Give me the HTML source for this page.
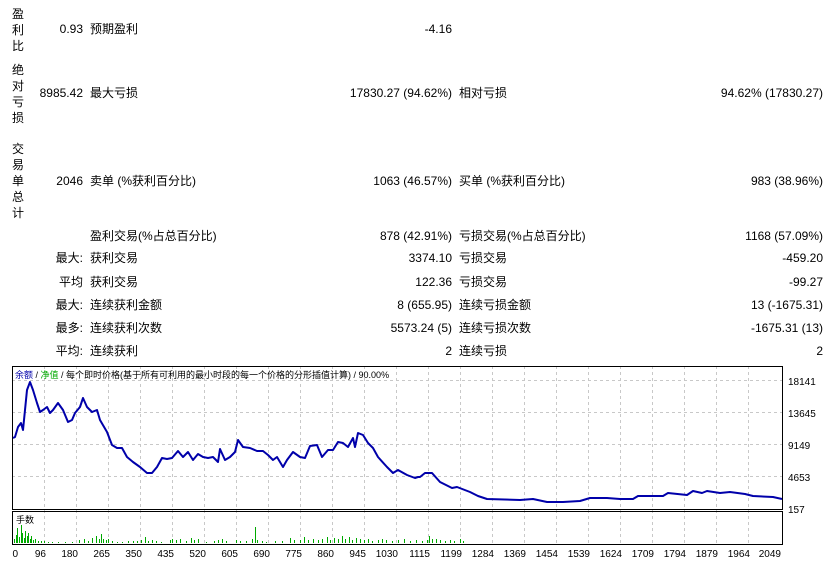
<!DOCTYPE html>
<html><head><meta charset="utf-8"><style>
body{margin:0;width:839px;height:566px;background:#fff;overflow:hidden;font-family:"Liberation Sans","Noto Sans CJK SC",sans-serif;font-size:12px;color:#000;position:relative}
.t{position:absolute;white-space:nowrap;line-height:14px}
.r{text-align:right}
.v{position:absolute;left:12px;width:14px;line-height:16px;font-size:12px}
</style></head><body>
<div class="v" style="top:6px">盈<br>利<br>比</div>
<div class="v" style="top:62px">绝<br>对<br>亏<br>损</div>
<div class="v" style="top:141px">交<br>易<br>单<br>总<br>计</div>

<div class="t r" style="right:756px;top:22px">0.93</div>
<div class="t" style="left:90px;top:22px">预期盈利</div>
<div class="t r" style="right:387px;top:22px">-4.16</div>

<div class="t r" style="right:756px;top:86px">8985.42</div>
<div class="t" style="left:90px;top:86px">最大亏损</div>
<div class="t r" style="right:387px;top:86px">17830.27 (94.62%)</div>
<div class="t" style="left:459px;top:86px">相对亏损</div>
<div class="t r" style="right:16px;top:86px">94.62% (17830.27)</div>

<div class="t r" style="right:756px;top:174px">2046</div>
<div class="t" style="left:90px;top:174px">卖单 (%获利百分比)</div>
<div class="t r" style="right:387px;top:174px">1063 (46.57%)</div>
<div class="t" style="left:459px;top:174px">买单 (%获利百分比)</div>
<div class="t r" style="right:16px;top:174px">983 (38.96%)</div>

<div class="t" style="left:90px;top:229px">盈利交易(%占总百分比)</div>
<div class="t r" style="right:387px;top:229px">878 (42.91%)</div>
<div class="t" style="left:459px;top:229px">亏损交易(%占总百分比)</div>
<div class="t r" style="right:16px;top:229px">1168 (57.09%)</div>

<div class="t r" style="right:756px;top:251px">最大:</div>
<div class="t" style="left:90px;top:251px">获利交易</div>
<div class="t r" style="right:387px;top:251px">3374.10</div>
<div class="t" style="left:459px;top:251px">亏损交易</div>
<div class="t r" style="right:16px;top:251px">-459.20</div>

<div class="t r" style="right:756px;top:275px">平均</div>
<div class="t" style="left:90px;top:275px">获利交易</div>
<div class="t r" style="right:387px;top:275px">122.36</div>
<div class="t" style="left:459px;top:275px">亏损交易</div>
<div class="t r" style="right:16px;top:275px">-99.27</div>

<div class="t r" style="right:756px;top:298px">最大:</div>
<div class="t" style="left:90px;top:298px">连续获利金额</div>
<div class="t r" style="right:387px;top:298px">8 (655.95)</div>
<div class="t" style="left:459px;top:298px">连续亏损金额</div>
<div class="t r" style="right:16px;top:298px">13 (-1675.31)</div>

<div class="t r" style="right:756px;top:321px">最多:</div>
<div class="t" style="left:90px;top:321px">连续获利次数</div>
<div class="t r" style="right:387px;top:321px">5573.24 (5)</div>
<div class="t" style="left:459px;top:321px">连续亏损次数</div>
<div class="t r" style="right:16px;top:321px">-1675.31 (13)</div>

<div class="t r" style="right:756px;top:344px">平均:</div>
<div class="t" style="left:90px;top:344px">连续获利</div>
<div class="t r" style="right:387px;top:344px">2</div>
<div class="t" style="left:459px;top:344px">连续亏损</div>
<div class="t r" style="right:16px;top:344px">2</div>

<svg width="839" height="566" style="position:absolute;left:0;top:0" xmlns="http://www.w3.org/2000/svg">
<g stroke="#c8c8c8" stroke-dasharray="3,3" stroke-width="1">
<path d="M44.5 366V545M76.5 366V545M108.5 366V545M140.5 366V545M172.5 366V545M204.5 366V545M236.5 366V545M268.5 366V545M300.5 366V545M332.5 366V545M364.5 366V545M396.5 366V545M428.5 366V545M460.5 366V545M492.5 366V545M524.5 366V545M556.5 366V545M588.5 366V545M620.5 366V545M652.5 366V545M684.5 366V545M716.5 366V545M748.5 366V545"/>
<path d="M12 380.5H783M12 412.5H783M12 444.5H783M12 476.5H783"/>
</g>
<rect x="12.5" y="366.5" width="770" height="143" fill="none" stroke="#000" stroke-width="1"/>
<rect x="12.5" y="511.5" width="770" height="33" fill="none" stroke="#000" stroke-width="1"/>
<polyline fill="none" stroke="#0000aa" stroke-width="2" stroke-linejoin="round" points="13,438 15,437 18,427 21,423 23,430 27,390 30,382 33,390 37,403 40,412 43,410 47,407 50,413 53,410 58,403 63,410 68,422 72,420 75,413 80,407 83,398 87,407 92,412 97,410 100,420 107,432 112,445 117,448 122,448 127,457 133,462 140,467 147,473 152,473 157,467 162,458 167,459 172,458 178,451 183,457 188,452 193,460 198,454 203,457 208,458 213,457 218,462 220,449 225,460 230,457 235,452 238,440 243,447 250,448 257,451 263,451 268,455 273,460 277,457 283,467 287,460 293,452 300,457 305,458 310,446 317,445 322,457 328,450 333,450 338,442 343,443 348,447 353,438 355,447 358,433 363,435 368,443 373,448 378,457 387,467 393,473 398,470 407,475 415,478 418,477 420,477 425,473 432,473 440,482 452,488 457,487 470,492 478,496 487,499 520,500 533,499 547,502 563,502 580,501 590,498 607,498 620,499 633,499 638,496 653,496 663,496 668,493 687,495 693,491 702,493 707,491 720,493 730,492 745,494 753,496 773,497 782,499"/>
<path stroke="#00aa00" stroke-width="1" fill="none" d="M14.5 543v-4M16.5 543v-8M17.5 543v-15M19.5 543v-6M21.5 543v-18M22.5 543v-10M24.5 543v-5M25.5 543v-12M27.5 543v-7M28.5 543v-10M30.5 543v-4M31.5 543v-7M33.5 543v-3M35.5 543v-4M38.5 543v-2M41.5 543v-2M44.5 543v-2M48.5 543v-1M52.5 543v-1M58.5 543v-1M65.5 543v-1M72.5 543v-1M79.5 543v-3M84.5 543v-4M88.5 543v-2M92.5 543v-5M96.5 543v-7M99.5 543v-4M101.5 543v-9M103.5 543v-4M106.5 543v-3M108.5 543v-4M112.5 543v-2M117.5 543v-1M122.5 543v-1M128.5 543v-2M133.5 543v-2M137.5 543v-2M141.5 543v-3M145.5 543v-6M148.5 543v-2M152.5 543v-3M156.5 543v-2M161.5 543v-1M170.5 543v-3M172.5 543v-4M176.5 543v-3M180.5 543v-4M186.5 543v-2M191.5 543v-5M194.5 543v-3M198.5 543v-4M206.5 543v-1M214.5 543v-2M218.5 543v-3M222.5 543v-4M226.5 543v-2M236.5 543v-3M240.5 543v-2M246.5 543v-2M252.5 543v-4M255.5 543v-16M257.5 543v-3M262.5 543v-2M266.5 543v-1M275.5 543v-2M282.5 543v-2M290.5 543v-5M294.5 543v-3M300.5 543v-3M304.5 543v-6M308.5 543v-3M313.5 543v-4M318.5 543v-3M322.5 543v-4M327.5 543v-6M330.5 543v-3M334.5 543v-5M338.5 543v-4M342.5 543v-7M345.5 543v-4M349.5 543v-6M352.5 543v-3M356.5 543v-5M360.5 543v-4M364.5 543v-3M368.5 543v-4M372.5 543v-2M378.5 543v-3M382.5 543v-4M386.5 543v-3M392.5 543v-2M398.5 543v-3M404.5 543v-4M410.5 543v-2M416.5 543v-3M422.5 543v-2M427.5 543v-3M429.5 543v-7M432.5 543v-4M436.5 543v-4M440.5 543v-3M445.5 543v-2M450.5 543v-3M454.5 543v-2M460.5 543v-4M463.5 543v-2"/>
<g font-family="'Liberation Sans','Noto Sans CJK SC',sans-serif" font-size="9">
<text x="15" y="378"><tspan fill="#0000aa">余额</tspan> / <tspan fill="#00aa00">净值</tspan> / 每个即时价格(基于所有可利用的最小时段的每一个价格的分形插值计算) / 90.00%</text>
<text x="16" y="523">手数</text>
</g>
<g font-family="'Liberation Sans',sans-serif" font-size="10" text-anchor="start">
<text x="788" y="385">18141</text><text x="788" y="417">13645</text><text x="788" y="449">9149</text><text x="788" y="481">4653</text><text x="788" y="513">157</text>
</g>
<g font-family="'Liberation Sans',sans-serif" font-size="10" text-anchor="end">
<text x="18" y="557">0</text><text x="46" y="557">96</text><text x="78" y="557">180</text><text x="110" y="557">265</text><text x="142" y="557">350</text><text x="174" y="557">435</text><text x="206" y="557">520</text><text x="238" y="557">605</text><text x="270" y="557">690</text><text x="302" y="557">775</text><text x="334" y="557">860</text><text x="366" y="557">945</text><text x="398" y="557">1030</text><text x="430" y="557">1115</text><text x="462" y="557">1199</text><text x="494" y="557">1284</text><text x="526" y="557">1369</text><text x="558" y="557">1454</text><text x="590" y="557">1539</text><text x="622" y="557">1624</text><text x="654" y="557">1709</text><text x="686" y="557">1794</text><text x="718" y="557">1879</text><text x="750" y="557">1964</text><text x="781" y="557">2049</text>
</g>
</svg>
</body></html>
